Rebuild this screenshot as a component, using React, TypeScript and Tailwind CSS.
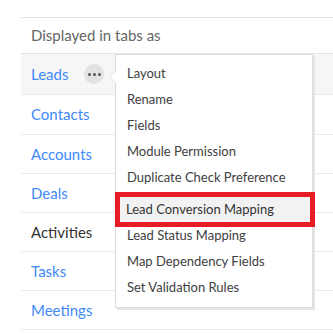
const tabs = [
  { name: 'Leads', h: 'h-[41px]', active: true },
  { name: 'Contacts', h: 'h-[40px]' },
  { name: 'Accounts', h: 'h-[39px]' },
  { name: 'Deals', h: 'h-[39px]' },
  { name: 'Activities', h: 'h-[39px]', dark: true },
  { name: 'Tasks', h: 'h-[39px]' },
  { name: 'Meetings', h: 'h-[39px]' },
]

const before = ['Layout', 'Rename', 'Fields', 'Module Permission', 'Duplicate Check Preference']
const after = ['Lead Status Mapping', 'Map Dependency Fields', 'Set Validation Rules']

function MenuItem({ label }: { label: string }) {
  return <div className="h-[26px] flex items-center pl-[11px] text-[13px] text-[#404040]">{label}</div>
}

export default function App() {
  return (
    <div className="w-[333px] h-[334px] bg-white overflow-hidden pt-[17px] pl-[21px] font-['Lato',sans-serif]">
      <div className="border-t border-[#e3e3e3] h-[35px] flex items-center pl-[10px] text-[15px] text-[#666]">
        Displayed in tabs as
      </div>
      <div className="border-t border-[#e3e3e3] mt-px relative">
        {tabs.map((t) => (
          <div
            key={t.name}
            className={`${t.h} border-b border-[#ebebeb] flex items-center pl-[10px] text-[15px] ${t.active ? 'bg-[#f6f6f6]' : ''} ${t.dark ? 'text-[#333]' : 'text-[#408af8]'}`}
          >
            <span>{t.name}</span>
            {t.active && (
              <span className="ml-[16px] w-[20px] h-[20px] rounded-full bg-[#e2e2e2] flex items-center justify-center gap-[2px]">
                <span className="w-[3px] h-[3px] rounded-full bg-[#555]" />
                <span className="w-[3px] h-[3px] rounded-full bg-[#555]" />
                <span className="w-[3px] h-[3px] rounded-full bg-[#555]" />
              </span>
            )}
          </div>
        ))}

        {/* popup menu */}
        <div className="absolute left-[94px] top-0 w-[198px] h-[254px] bg-white border border-[#dcdcdc] shadow-[2px_2px_0_#e4e4e4] pt-[6px]">
          <div className="absolute -left-[7px] top-[15px] w-0 h-0 border-y-[7px] border-y-transparent border-r-[7px] border-r-[#dcdcdc]" />
          <div className="absolute -left-[6px] top-[15px] w-0 h-0 border-y-[7px] border-y-transparent border-r-[7px] border-r-white" />
          {before.map((l) => <MenuItem key={l} label={l} />)}
          <div className="relative -left-px w-[200px] h-[35px] mt-px -mb-[4px] border-[5px] border-[#e81c24] bg-[#f2f2f2] flex items-center pl-[6px] text-[13px] text-[#333]">
            Lead Conversion Mapping
          </div>
          {after.map((l) => <MenuItem key={l} label={l} />)}
        </div>
      </div>
    </div>
  )
}
